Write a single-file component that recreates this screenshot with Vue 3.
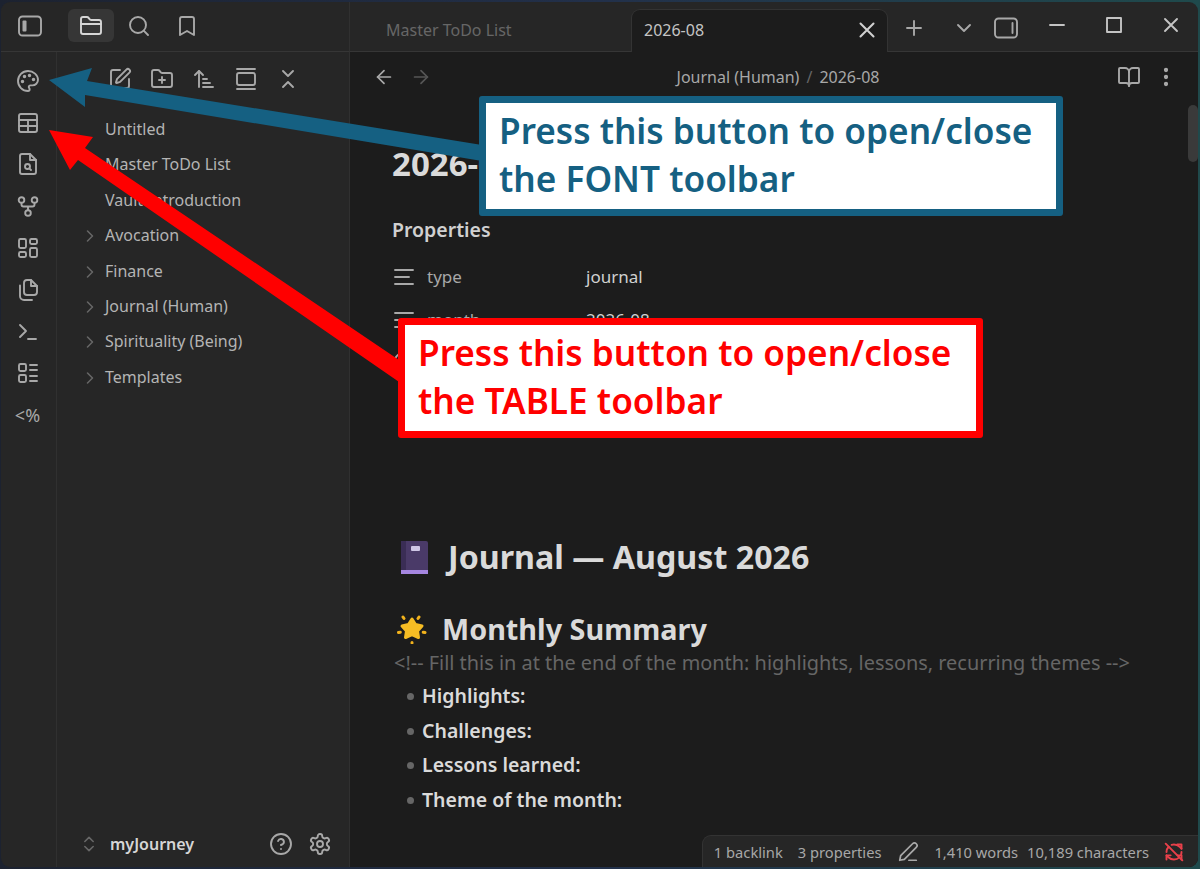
<template>
  <div class="desktop">
    <div class="window">

      <!-- TITLE BAR -->
      <header class="titlebar">
        <div class="title-left">
          <svg class="icon toggle" viewBox="0 0 24 24" v-html="icons.sidebarLeft"></svg>
          <div class="view-tabs">
            <button class="view-tab active"><svg class="icon" viewBox="0 0 24 24" v-html="icons.folder"></svg></button>
            <button class="view-tab"><svg class="icon" viewBox="0 0 24 24" v-html="icons.search"></svg></button>
            <button class="view-tab"><svg class="icon" viewBox="0 0 24 24" v-html="icons.bookmark"></svg></button>
          </div>
        </div>
        <div class="tabstrip">
          <div class="tab">Master ToDo List</div>
          <div class="tab current">
            <span>2026-08</span>
            <svg class="icon tab-close" viewBox="0 0 24 24" v-html="icons.x"></svg>
          </div>
          <div class="win-tools">
            <svg class="icon plus" viewBox="0 0 24 24" v-html="icons.plus"></svg>
            <svg class="icon chev" viewBox="0 0 24 24" v-html="icons.chevronDown"></svg>
            <svg class="icon side-r" viewBox="0 0 24 24" v-html="icons.sidebarRight"></svg>
          </div>
          <div class="win-buttons">
            <svg class="icon" viewBox="0 0 24 24" v-html="icons.minimize"></svg>
            <svg class="icon" viewBox="0 0 24 24" v-html="icons.maximize"></svg>
            <svg class="icon" viewBox="0 0 24 24" v-html="icons.x"></svg>
          </div>
        </div>
      </header>

      <div class="body">
        <!-- RIBBON -->
        <nav class="ribbon">
          <div v-for="r in ribbon" :key="r" class="ribbon-item">
            <svg class="icon" viewBox="0 0 24 24" v-html="icons[r]"></svg>
          </div>
          <div class="ribbon-item percent">&lt;%</div>
        </nav>

        <!-- FILE EXPLORER -->
        <aside class="sidebar">
          <div class="nav-tools">
            <svg v-for="t in navTools" :key="t" class="icon" viewBox="0 0 24 24" v-html="icons[t]"></svg>
          </div>
          <ul class="tree">
            <li v-for="f in files" :key="f" class="tree-item">{{ f }}</li>
            <li v-for="f in folders" :key="f" class="tree-item">
              <svg class="icon caret" viewBox="0 0 24 24" v-html="icons.chevronRight"></svg>
              {{ f }}
            </li>
          </ul>
          <div class="vault">
            <svg class="icon updown" viewBox="0 0 24 24" v-html="icons.upDown"></svg>
            <span class="vault-name">myJourney</span>
            <svg class="icon help" viewBox="0 0 24 24" v-html="icons.help"></svg>
            <svg class="icon gear" viewBox="0 0 24 24" v-html="icons.settings"></svg>
          </div>
        </aside>

        <!-- EDITOR -->
        <main class="editor">
          <div class="editor-head">
            <svg class="icon back" viewBox="0 0 24 24" v-html="icons.arrowLeft"></svg>
            <svg class="icon forward" viewBox="0 0 24 24" v-html="icons.arrowRight"></svg>
            <div class="crumbs">Journal (Human)<span class="slash">/</span>2026-08</div>
            <svg class="icon book" viewBox="0 0 24 24" v-html="icons.bookOpen"></svg>
            <svg class="icon more" viewBox="0 0 24 24" v-html="icons.more"></svg>
          </div>

          <div class="doc">
            <h1 class="note-title">2026-08</h1>
            <div class="props-head">Properties</div>
            <div v-for="p in props" :key="p.icon + p.k" class="prop">
              <svg class="icon prop-icon" viewBox="0 0 24 24" v-html="icons[p.icon]"></svg>
              <span class="prop-key">{{ p.k }}</span>
              <span class="prop-val">{{ p.v }}</span>
            </div>

            <h2 class="h1">
              <svg class="emoji book-emoji" viewBox="0 0 27 33">
                <rect x="0" y="0" width="27" height="33" rx="2" fill="#4a3a68" />
                <rect x="0" y="0" width="5" height="33" fill="#3a2d55" />
                <rect x="10" y="5" width="9" height="5" rx="1" fill="#cfc6e6" />
                <rect x="0" y="29" width="27" height="4" fill="#a586e0" />
              </svg>
              Journal — August 2026
            </h2>
            <h3 class="h2">
              <svg class="emoji star-emoji" viewBox="0 0 30 30">
                <path d="M15 5l3.500 5.500 6.500 1.500-4.500 5 1 6.500-6.500-2.800-6.500 2.800 1-6.500-4.500-5 6.500-1.500z" fill="#f6bd24" stroke="#f6bd24" stroke-width="3" stroke-linejoin="round" />
                <path d="M6 3l1 1.500M22 3l-1 1.500M1.500 18.500l1.800-.3M28 18.500l-1.800-.3M15 28.500v.5" stroke="#f2b21c" stroke-width="3" stroke-linecap="round" />
              </svg>
              Monthly Summary
            </h3>
            <p class="comment">&lt;!-- Fill this in at the end of the month: highlights, lessons, recurring themes --&gt;</p>
            <ul class="bullets">
              <li v-for="b in bullets" :key="b">{{ b }}</li>
            </ul>
          </div>

          <div class="scrollbar"></div>

          <div class="status">
            <span>1 backlink</span>
            <span>3 properties</span>
            <svg class="icon pen" viewBox="0 0 24 24" v-html="icons.pencil"></svg>
            <span>1,410 words</span>
            <span class="chars">10,189 characters</span>
            <svg class="icon sync" viewBox="0 0 24 24" v-html="icons.syncOff"></svg>
          </div>
        </main>
      </div>
    </div>

    <!-- ANNOTATIONS -->
    <svg class="arrows" viewBox="0 0 1200 869">
      <polygon points="49,80 92,68 87,81 482,145 482,161 85,95 85,107" fill="#156082" />
      <polygon points="49,130 93,137 85,148 402,362 402,384 78,160 70,170" fill="#ff0000" />
    </svg>
    <div class="callout blue">Press this button to open/close<br />the FONT toolbar</div>
    <div class="callout red">Press this button to open/close<br />the TABLE toolbar</div>
  </div>
</template>

<script setup>
const folderPath = '<path d="M20 20a2 2 0 0 0 2-2V8a2 2 0 0 0-2-2h-7.900a2 2 0 0 1-1.690-.9L9.600 3.900A2 2 0 0 0 7.930 3H4a2 2 0 0 0-2 2v13a2 2 0 0 0 2 2Z"/>'

const icons = {
  sidebarLeft: '<rect x="1" y="2.500" width="22" height="19" rx="3.500"/><rect x="4.500" y="6.500" width="4" height="11" rx="1" fill="currentColor" stroke="none"/>',
  sidebarRight: '<rect x="1" y="2.500" width="22" height="19" rx="3.500"/><path d="M18.500 7v10"/>',
  folder: folderPath + '<path d="M2 10h20"/>',
  search: '<circle cx="11" cy="11" r="8"/><path d="m21 21-4.300-4.300"/>',
  bookmark: '<path d="m19 21-7-4-7 4V5a2 2 0 0 1 2-2h10a2 2 0 0 1 2 2v16z"/>',
  palette: '<circle cx="13.500" cy="6.500" r=".8" fill="currentColor"/><circle cx="17.500" cy="10.500" r=".8" fill="currentColor"/><circle cx="8.500" cy="7.500" r=".8" fill="currentColor"/><circle cx="6.500" cy="12.500" r=".8" fill="currentColor"/><path d="M12 2C6.500 2 2 6.500 2 12s4.500 10 10 10c.926 0 1.648-.746 1.648-1.688 0-.437-.18-.835-.437-1.125-.29-.289-.438-.652-.438-1.125a1.640 1.640 0 0 1 1.668-1.668h1.996c3.051 0 5.555-2.503 5.555-5.554C21.965 6.012 17.461 2 12 2z"/>',
  table: '<rect x="3" y="3" width="18" height="18" rx="2"/><path d="M3 9h18M3 15h18M12 9v12"/>',
  fileSearch: '<path d="M14 2H6a2 2 0 0 0-2 2v16a2 2 0 0 0 2 2h12a2 2 0 0 0 2-2V8z"/><path d="M14 2v6h6"/><circle cx="11.500" cy="14.500" r="2.500"/><path d="M13.300 16.300 15 18"/>',
  graph: '<circle cx="12" cy="19" r="2.800"/><circle cx="5.500" cy="6" r="2.800"/><circle cx="18.500" cy="6" r="2.800"/><path d="M5.500 9v1.500c0 1 .5 2 2 2h9c1.500 0 2-1 2-2V9M12 12.500v3.500"/>',
  dashboard: '<rect x="3" y="3" width="7" height="9" rx="1.500"/><rect x="14" y="3" width="7" height="5" rx="1.500"/><rect x="14" y="12" width="7" height="9" rx="1.500"/><rect x="3" y="16" width="7" height="5" rx="1.500"/>',
  files: '<path d="M15 2h-4a3 3 0 0 0-3 3v9a3 3 0 0 0 3 3h7a3 3 0 0 0 3-3V8z"/><path d="M15 2v6h6"/><path d="M4 7.500V18a4 4 0 0 0 4 4h8"/>',
  terminal: '<path d="m4 17 6-6-6-6"/><path d="M12 19h8"/>',
  todo: '<rect x="3" y="3" width="7" height="7" rx="1.500"/><rect x="3" y="14" width="7" height="7" rx="1.500"/><path d="M14 4h7M14 9h7M14 15h7M14 20h7"/>',
  edit: '<path d="M12 3H5a2 2 0 0 0-2 2v14a2 2 0 0 0 2 2h14a2 2 0 0 0 2-2v-7"/><path d="M18.375 2.625a1 1 0 0 1 3 3l-9.013 9.014a2 2 0 0 1-.853.505l-2.873.84a.5.5 0 0 1-.62-.62l.84-2.873a2 2 0 0 1 .506-.852z"/>',
  folderPlus: '<path d="M12 10v6M9 13h6"/>' + folderPath,
  sort: '<path d="m3 8 4-4 4 4"/><path d="M7 4v16"/><path d="M11 12h4M11 16h7M11 20h10"/>',
  gallery: '<path d="M3 2h18"/><rect x="3" y="6" width="18" height="12" rx="2"/><path d="M3 22h18"/>',
  collapse: '<path d="m7 20 5-5 5 5"/><path d="m7 4 5 5 5-5"/>',
  plus: '<path d="M5 12h14M12 5v14"/>',
  x: '<path d="M18 6 6 18M6 6l12 12"/>',
  chevronDown: '<path d="m6 9 6 6 6-6"/>',
  chevronRight: '<path d="m9 18 6-6-6-6"/>',
  minimize: '<path d="M5 12h14"/>',
  maximize: '<rect x="5" y="5" width="14" height="14"/>',
  upDown: '<path d="m7 15 5 5 5-5"/><path d="m7 9 5-5 5 5"/>',
  help: '<circle cx="12" cy="12" r="10"/><path d="M9.090 9a3 3 0 0 1 5.830 1c0 2-3 3-3 3"/><path d="M12 17h.01"/>',
  settings: '<path d="M12.220 2h-.44a2 2 0 0 0-2 2v.18a2 2 0 0 1-1 1.730l-.43.25a2 2 0 0 1-2 0l-.15-.08a2 2 0 0 0-2.730.73l-.22.38a2 2 0 0 0 .73 2.730l.15.1a2 2 0 0 1 1 1.720v.51a2 2 0 0 1-1 1.740l-.15.09a2 2 0 0 0-.73 2.730l.22.38a2 2 0 0 0 2.730.73l.15-.08a2 2 0 0 1 2 0l.43.25a2 2 0 0 1 1 1.730V20a2 2 0 0 0 2 2h.44a2 2 0 0 0 2-2v-.18a2 2 0 0 1 1-1.730l.43-.25a2 2 0 0 1 2 0l.15.08a2 2 0 0 0 2.730-.73l.22-.39a2 2 0 0 0-.73-2.730l-.15-.08a2 2 0 0 1-1-1.740v-.5a2 2 0 0 1 1-1.740l.15-.09a2 2 0 0 0 .73-2.730l-.22-.38a2 2 0 0 0-2.730-.73l-.15.08a2 2 0 0 1-2 0l-.43-.25a2 2 0 0 1-1-1.730V4a2 2 0 0 0-2-2z"/><circle cx="12" cy="12" r="3"/>',
  arrowLeft: '<path d="m12 19-7-7 7-7"/><path d="M19 12H5"/>',
  arrowRight: '<path d="M5 12h14"/><path d="m12 5 7 7-7 7"/>',
  bookOpen: '<path d="M12 7v14"/><path d="M3 18a1 1 0 0 1-1-1V4a1 1 0 0 1 1-1h5a4 4 0 0 1 4 4 4 4 0 0 1 4-4h5a1 1 0 0 1 1 1v13a1 1 0 0 1-1 1h-6a3 3 0 0 0-3 3 3 3 0 0 0-3-3z"/>',
  more: '<circle cx="12" cy="5" r="1.200" fill="currentColor"/><circle cx="12" cy="12" r="1.200" fill="currentColor"/><circle cx="12" cy="19" r="1.200" fill="currentColor"/>',
  text: '<path d="M3 5h18M3 12h14M3 19h18"/>',
  clock: '<circle cx="12" cy="12" r="10"/><path d="M12 6v6l4 2"/>',
  pencil: '<path d="M17 3a2.800 2.800 0 1 1 4 4L8 20l-5 1 1-5z"/><path d="M13 21h8"/>',
  syncOff: '<path d="M21 8 18.740 5.740A9.750 9.750 0 0 0 12 3c-1 0-1.970.16-2.880.46"/><path d="M8 16H3v5"/><path d="M3 12c0-2.490 1-4.740 2.640-6.360"/><path d="m3 16 2.260 2.260A9.750 9.750 0 0 0 12 21c2.490 0 4.740-1 6.360-2.640"/><path d="M21 12c0 1-.16 1.970-.46 2.880"/><path d="M21 8V3h-5"/><path d="M16 16h5v5"/><path d="m2 2 20 20"/>'
}

const ribbon = ['palette', 'table', 'fileSearch', 'graph', 'dashboard', 'files', 'terminal', 'todo']

const navTools = ['edit', 'folderPlus', 'sort', 'gallery', 'collapse']

const files = ['Untitled', 'Master ToDo List', 'Vault Introduction']

const folders = ['Avocation', 'Finance', 'Journal (Human)', 'Spirituality (Being)', 'Templates']

// third row sits behind the red callout, only its icon shows
const props = [
  { k: 'type', v: 'journal', icon: 'text' },
  { k: 'month', v: '2026-08', icon: 'text' },
  { k: '', v: '', icon: 'clock' }
]

const bullets = ['Highlights:', 'Challenges:', 'Lessons learned:', 'Theme of the month:']
</script>

<style>
html, body {
  margin: 0;
  height: 100%;
  background: linear-gradient(90deg, #1c2230, #22304a 50%, #1f4a4c);
  overflow: hidden;
}
</style>

<style scoped>
.desktop {
  position: relative;
  width: 1200px;
  height: 869px;
  padding: 2px 2px 2px 1px;
  box-sizing: border-box;
  font-family: "Noto Sans", "Liberation Sans", sans-serif;
  color: #dadada;
}

.window {
  display: flex;
  flex-direction: column;
  height: 100%;
  border-radius: 9px;
  overflow: hidden;
  background: #262626;
}

.icon {
  width: 24px;
  height: 24px;
  flex: none;
  fill: none;
  stroke: currentColor;
  stroke-width: 1.900;
  stroke-linecap: round;
  stroke-linejoin: round;
  color: #a8a8a8;
}

/* TITLE BAR */
.titlebar {
  display: flex;
  height: 50px;
  flex: none;
}

.title-left {
  display: flex;
  align-items: center;
  width: 349px;
  flex: none;
  padding: 0 0 2px 17px;
  box-sizing: border-box;
  border-right: 1px solid #303030;
  border-bottom: 1px solid #363636;
}

.view-tabs {
  display: flex;
  gap: 2px;
  margin-left: 26px;
}

.view-tab {
  display: flex;
  align-items: center;
  justify-content: center;
  width: 46px;
  height: 33px;
  padding: 0;
  border: none;
  border-radius: 6px;
  background: none;
}

.view-tab.active {
  background: #363636;
}

.view-tab.active .icon {
  color: #d6d6d6;
}

.tabstrip {
  display: flex;
  flex: 1;
  border-bottom: 1px solid #363636;
}

.tab {
  width: 245px;
  padding: 15px 0 0 36px;
  font-size: 16px;
  line-height: 26px;
  color: #666;
  white-space: nowrap;
}

.tab.current {
  display: flex;
  justify-content: space-between;
  width: 257px;
  height: 43px;
  margin-top: 7px;
  margin-bottom: -1px;
  padding: 7px 7px 0 12px;
  box-sizing: border-box;
  border-radius: 9px 9px 0 0;
  border: 1px solid #333;
  border-bottom: none;
  background: #1c1c1c;
  color: #c4c4c4;
}

.tab-close {
  width: 26px;
  height: 26px;
  color: #d0d0d0;
}

.win-tools {
  display: flex;
  align-items: center;
  gap: 26px;
  padding: 2px 0 0 14px;
}

.side-r {
  margin-left: -8px;
}

.win-buttons {
  display: flex;
  align-items: center;
  gap: 33px;
  margin-left: 27px;
  padding-bottom: 4px;
}

.win-buttons .icon {
  color: #c4c4c4;
}

/* RIBBON */
.body {
  display: flex;
  flex: 1;
  min-height: 0;
}

.ribbon {
  display: flex;
  flex-direction: column;
  width: 56px;
  flex: none;
  padding-top: 8px;
  box-sizing: border-box;
  border-right: 1px solid #303030;
}

.ribbon-item {
  display: flex;
  align-items: center;
  justify-content: center;
  height: 41.800px;
  padding-right: 2px;
}

.percent {
  font-size: 18px;
  color: #a8a8a8;
}

/* SIDEBAR */
.sidebar {
  display: flex;
  flex-direction: column;
  width: 293px;
  flex: none;
  border-right: 1px solid #303030;
  box-sizing: border-box;
}

.nav-tools {
  display: flex;
  gap: 18px;
  padding: 15px 0 0 51px;
}

.tree {
  flex: 1;
  margin: 0;
  padding: 21px 0 0 48px;
  list-style: none;
}

.tree-item {
  position: relative;
  height: 35.400px;
  font-size: 16px;
  line-height: 35.400px;
  color: #b4b4b4;
  white-space: nowrap;
}

.caret {
  position: absolute;
  left: -25px;
  top: 8px;
  width: 20px;
  height: 20px;
  color: #666;
}

.vault {
  display: flex;
  align-items: center;
  height: 46px;
  padding: 0 17px 0 22px;
}

.updown {
  width: 20px;
  height: 20px;
  color: #666;
}

.vault-name {
  flex: 1;
  margin-left: 11px;
  font-size: 16px;
  font-weight: 600;
  color: #d6d6d6;
}

.gear {
  margin-left: 15px;
}

/* EDITOR */
.editor {
  position: relative;
  flex: 1;
  min-width: 0;
  background: #1c1c1c;
  overflow: hidden;
}

.editor-head {
  position: relative;
  display: flex;
  align-items: center;
  height: 50px;
  padding: 0 20px 0 23px;
}

.back, .forward {
  width: 22px;
  height: 22px;
}

.forward {
  margin-left: 15px;
  color: #555;
}

.crumbs {
  flex: 1;
  text-align: center;
  font-size: 16px;
  color: #a8a8a8;
  padding-left: 7px;
}

.slash {
  margin: 0 7px;
  color: #666;
}

.more {
  margin-left: 13px;
}

.doc {
  padding: 40px 0 0 42px;
}

.note-title {
  margin: 0;
  font-size: 33px;
  line-height: 44px;
  font-weight: 700;
  color: #dadada;
  white-space: nowrap;
}

.props-head {
  margin-top: 31px;
  font-size: 19.500px;
  line-height: 26px;
  font-weight: 600;
  color: #d0d0d0;
}

.prop {
  display: flex;
  align-items: center;
  height: 43px;
  margin-top: 12px;
}

.prop + .prop {
  margin-top: 0;
}

.prop-icon {
  color: #a8a8a8;
}

.prop-key {
  width: 159px;
  margin-left: 11px;
  font-size: 17px;
  color: #a8a8a8;
}

.prop-val {
  font-size: 17px;
  color: #d0d0d0;
}

.h1 {
  display: flex;
  align-items: center;
  gap: 20px;
  margin: 151px 0 0 9px;
  font-size: 32.200px;
  line-height: 44px;
  font-weight: 700;
  color: #dadada;
}

.emoji {
  flex: none;
}

.book-emoji {
  width: 27px;
  height: 33px;
}

.h2 {
  display: flex;
  align-items: center;
  gap: 15px;
  margin: 30px 0 0 5px;
  font-size: 28.800px;
  line-height: 40px;
  font-weight: 700;
  color: #dadada;
}

.star-emoji {
  width: 30px;
  height: 30px;
}

.comment {
  margin: 0 0 0 2px;
  font-size: 19.900px;
  line-height: 28px;
  color: #666;
  white-space: nowrap;
}

.bullets {
  margin: 2px 0 0 30px;
  padding: 0;
  list-style: none;
}

.bullets li {
  position: relative;
  height: 34.600px;
  font-size: 19.500px;
  line-height: 34.600px;
  font-weight: 600;
  color: #dadada;
}

.bullets li::before {
  content: "";
  position: absolute;
  left: -15px;
  top: 14px;
  width: 7px;
  height: 7px;
  border-radius: 50%;
  background: #666;
}

.scrollbar {
  position: absolute;
  top: 53px;
  right: 0;
  width: 10px;
  height: 57px;
  border-radius: 5px;
  background: #3a3a3a;
}

.status {
  position: absolute;
  right: 0;
  bottom: 0;
  display: flex;
  align-items: center;
  gap: 15px;
  height: 31px;
  padding: 0 14px 0 11px;
  border: 1px solid #333;
  border-right: none;
  border-bottom: none;
  border-radius: 9px 0 0 0;
  background: #262626;
  font-size: 14.700px;
  color: #a8a8a8;
  white-space: nowrap;
}

.pen {
  width: 22px;
  height: 22px;
  margin-left: 1px;
  color: #a8a8a8;
}

.chars {
  margin-left: -6px;
}

.sync {
  width: 20px;
  height: 20px;
  stroke-width: 2.300;
  color: #e8404a;
}

/* ANNOTATIONS */
.arrows {
  position: absolute;
  left: 0;
  top: 0;
  width: 1200px;
  height: 869px;
  pointer-events: none;
}

.callout {
  position: absolute;
  padding: 3px 0 0 13px;
  box-sizing: border-box;
  border: 7px solid;
  border-radius: 3px;
  background: #fff;
  font-size: 35.200px;
  line-height: 48px;
  font-weight: 600;
  white-space: nowrap;
}

.callout.blue {
  left: 479px;
  top: 96px;
  width: 584px;
  height: 120px;
  border-color: #156082;
  color: #156082;
}

.callout.red {
  left: 398px;
  top: 318px;
  width: 585px;
  height: 120px;
  border-color: #ff0000;
  color: #ff0000;
}
</style>
